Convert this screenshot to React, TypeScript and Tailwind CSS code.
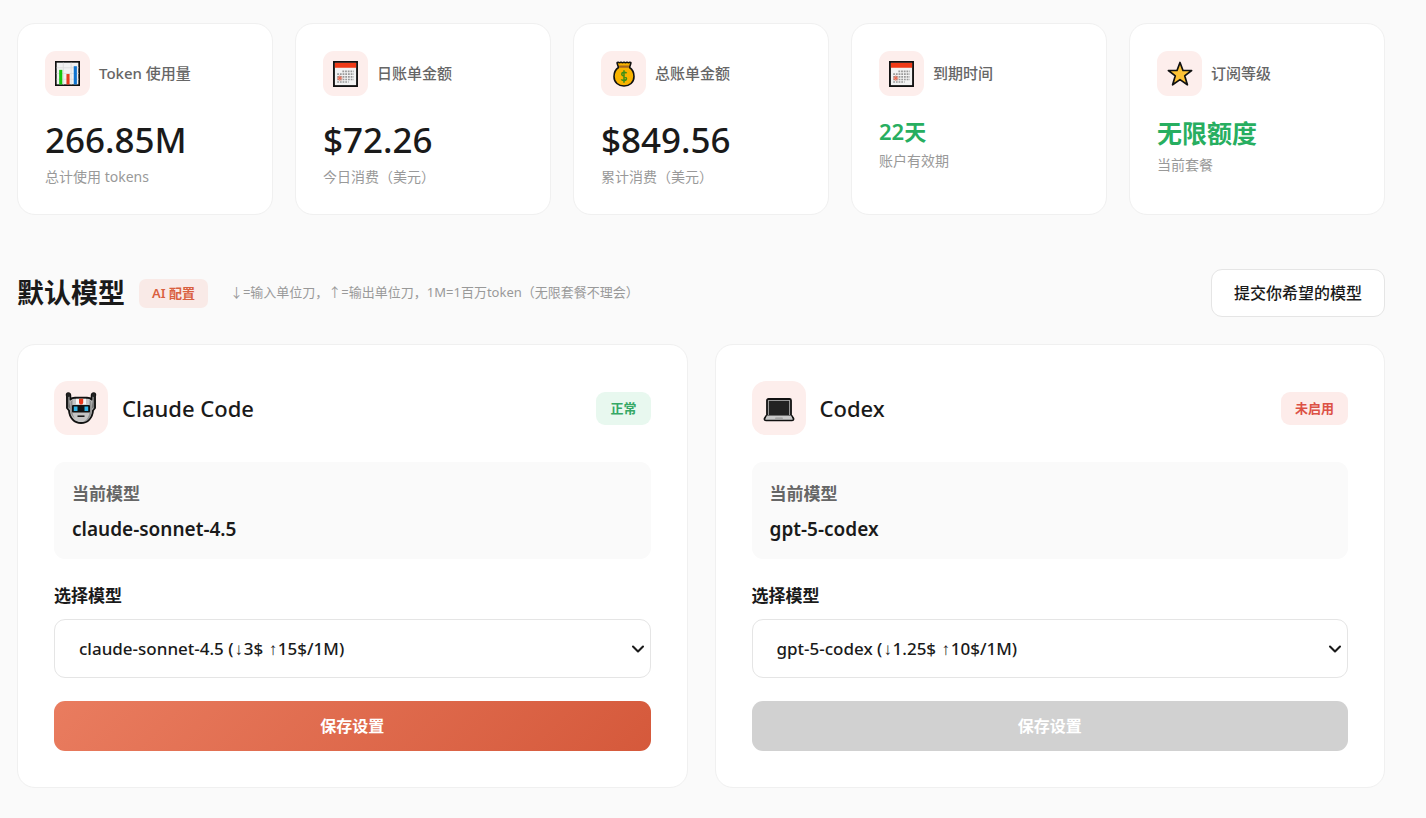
import React, { useState } from 'react';
import { ChevronDown } from 'lucide-react';

interface Stat {
  icon: React.ReactNode;
  label: string;
  value: string;
  caption: string;
  valueClass: string;
}

interface ModelCardProps {
  id: string;
  icon: React.ReactNode;
  name: string;
  model: string;
  option: string;
  enabled: boolean;
}

const ChartIcon = () => (
  <svg width="25" height="25" viewBox="0 0 24 24" aria-hidden="true">
    <rect x="0.8" y="0.8" width="22.4" height="22.4" fill="#f2f2f2" stroke="#111" strokeWidth="1.6" />
    <path d="M1.6 6.5h21M1.6 12h21M1.6 17.5h21M8 1.6v21M15.5 1.6v21" stroke="#dcdcdc" strokeWidth="0.8" />
    <rect x="4" y="8.5" width="3" height="14" fill="#16c60c" />
    <rect x="11" y="12.5" width="3" height="10" fill="#e63c1e" />
    <rect x="18" y="5" width="3" height="17.5" fill="#0f74d0" />
  </svg>
);

const CalendarIcon = () => (
  <svg width="25" height="26" viewBox="0 0 24 25" aria-hidden="true">
    <rect x="0.9" y="0.9" width="22.2" height="23.2" fill="#f2f2f2" stroke="#111" strokeWidth="1.8" />
    <rect x="1.8" y="1.8" width="20.4" height="4.7" fill="#f03a17" />
    <path d="M9 10h11M4 12.6h16M4 15.2h16M4 17.8h16M4 20.2h11" stroke="#999" strokeWidth="1.6" strokeDasharray="1.7 0.9" />
    <path d="M6.5 14v5M4 16.5h5M4.8 14.8l3.4 3.4M8.2 14.8l-3.4 3.4" stroke="#ee6a50" strokeWidth="0.9" />
  </svg>
);

const MoneyBagIcon = () => (
  <svg width="22" height="26" viewBox="0 0 22 26" aria-hidden="true">
    <path
      d="M5 1.2q1.5 1 3 0q1.5 1 3 0q1.5 1 3 0q1.5 1 3 0q1.2 0 .8 1.2L16.5 6.5C19.5 8.5 21 12 21 15.5C21 21.5 16.5 25 11 25S1 21.5 1 15.5C1 12 2.5 8.5 5.5 6.5L4.2 2.4Q3.8 1.2 5 1.2Z"
      fill="#f9b300"
      stroke="#111"
      strokeWidth="1.6"
      strokeLinejoin="round"
    />
    <path d="M5.8 4.5h10.4l-.6 2.3H6.4z" fill="#a4661d" />
    <path
      d="M13.6 12.3C12.5 10.8 8.7 10.9 8.7 13.3C8.7 15.8 13.5 14.9 13.5 17.5C13.5 20 9.3 20 8.3 18.4M11 9.3v12.5"
      fill="none"
      stroke="#3f8f16"
      strokeWidth="1.5"
    />
  </svg>
);

const StarIcon = () => (
  <svg width="26" height="26" viewBox="0 0 26 26" aria-hidden="true">
    <path
      d="M13 1.5l3 8h8.6l-6.9 5.3 2.7 9L13 18.6l-7.4 5.2 2.7-9L1.4 9.5H10z"
      fill="#fdc236"
      stroke="#111"
      strokeWidth="1.7"
      strokeLinejoin="round"
    />
  </svg>
);

const RobotIcon = () => (
  <svg width="32" height="32" viewBox="0 0 32 32" aria-hidden="true">
    <path
      d="M2 4Q1 1.8 3.2 1.2Q5.4 1.2 5.3 3.5V7.5Q7 5.8 10 5.8H22Q25 5.800 26.7 7.5V3.5Q26.6 1.2 28.8 1.2Q31 1.8 30 4V16L28 18.500C27.500 26 22.500 31 16 31S4.500 26 4 18.500L2 16z"
      fill="#c4c4c4"
      stroke="#111"
      strokeWidth="1.9"
      strokeLinejoin="round"
    />
    <path d="M3 4.500h1.500v5L5.500 17 3 15.500zM29 4.500h-1.500v5L26.500 17l2.500-1.500z" fill="#777" />
    <path d="M5.500 9.500L7.500 8v11c0 3 1 5.500 2.500 7.500C7 24.500 5.500 21.500 5.300 18zM26.500 9.500L24.500 8v11c0 5-2 8.500-6 11C24 29 26.500 24 26.700 18z" fill="#8f8f8f" />
    <circle cx="3.500" cy="3" r="2" fill="#222" />
    <circle cx="28.500" cy="3" r="2" fill="#222" />
    <rect x="11" y="6.800" width="10" height="5.500" fill="#f7f7f7" />
    <path d="M14 6.800h4.200v4.200l-1 1.500h-2.200l-1-1.500z" fill="#e8391c" />
    <rect x="7" y="13" width="18" height="7.500" rx="1" fill="#111" />
    <rect x="8.800" y="14.500" width="3.700" height="4.500" fill="#2fb5e8" />
    <rect x="19.500" y="14.500" width="3.700" height="4.500" fill="#2fb5e8" />
    <path d="M12.500 24.200h7" stroke="#111" strokeWidth="1.5" />
  </svg>
);

const LaptopIcon = () => (
  <svg width="32" height="32" viewBox="0 0 32 32" aria-hidden="true">
    <path d="M3.5 23.5l-2 3q-.4 2 1.7 2h25.600q2.100 0 1.700-2l-2-3z" fill="#c8c8c8" stroke="#111" strokeWidth="1.7" strokeLinejoin="round" />
    <rect x="4" y="7" width="24" height="17" rx="1.5" fill="#b8b8b8" stroke="#111" strokeWidth="1.8" />
    <rect x="5.8" y="8.8" width="20.4" height="14.2" fill="#222" />
    <path d="M4 23.5h24l1 2.5H3z" fill="#c8c8c8" />
    <path d="M12.5 25.5h7l.5 1.2h-8z" fill="#999" />
  </svg>
);

const stats: Stat[] = [
  { icon: <ChartIcon />, label: 'Token 使用量', value: '266.85M', caption: '总计使用 tokens', valueClass: 'text-[35px] leading-[43px] font-medium text-[#1a1a1a]' },
  { icon: <CalendarIcon />, label: '日账单金额', value: '$72.26', caption: '今日消费（美元）', valueClass: 'text-[35px] leading-[43px] font-medium text-[#1a1a1a]' },
  { icon: <MoneyBagIcon />, label: '总账单金额', value: '$849.56', caption: '累计消费（美元）', valueClass: 'text-[35px] leading-[43px] font-medium text-[#1a1a1a]' },
  { icon: <CalendarIcon />, label: '到期时间', value: '22天', caption: '账户有效期', valueClass: 'text-[22px] leading-[27px] font-semibold text-[#27ae60]' },
  { icon: <StarIcon />, label: '订阅等级', value: '无限额度', caption: '当前套餐', valueClass: 'text-[25px] leading-[31px] font-semibold text-[#27ae60]' },
];

const StatCard: React.FC<Stat> = ({ icon, label, value, caption, valueClass }) => (
  <div className="bg-white border border-[#f0f0f0] rounded-[18px] px-[27px] pt-[27px] pb-[26px]">
    <div className="flex items-center gap-[9px] mb-[22px]">
      <div className="size-[45px] shrink-0 rounded-[11px] bg-[#fdeeec] flex items-center justify-center">
        {icon}
      </div>
      <span className="text-[15px] font-medium text-[#666]">{label}</span>
    </div>
    <div className={valueClass}>{value}</div>
    <div className="mt-[5px] text-sm leading-[22px] text-[#999]">{caption}</div>
  </div>
);

const ModelCard: React.FC<ModelCardProps> = ({ id, icon, name, model, option, enabled }) => {
  const [selected, setSelected] = useState(option);

  return (
    <div className="bg-white border border-[#f0f0f0] rounded-[18px] p-9">
      <div className="flex items-center justify-between mb-[27px]">
        <div className="flex items-center gap-[14px]">
          <div className="size-[54px] rounded-[14px] bg-[#fdeeec] flex items-center justify-center">
            {icon}
          </div>
          <h3 className="text-[22px] font-medium text-[#1a1a1a]">{name}</h3>
        </div>
        <span
          className={
            enabled
              ? 'rounded-[9px] px-[14px] py-[7px] text-[13px] leading-[19px] font-bold bg-[#e8f8ef] text-[#36a866]'
              : 'rounded-[9px] px-[14px] py-[7px] text-[13px] leading-[19px] font-bold bg-[#fdecea] text-[#dc5145]'
          }
        >
          {enabled ? '正常' : '未启用'}
        </span>
      </div>

      <div className="bg-[#fafafa] rounded-[11px] px-[18px] pt-[18px] pb-[15px] mb-[23px]">
        <div className="text-[17px] leading-[27px] font-semibold text-[#666]">当前模型</div>
        <div className="mt-[7px] text-[19px] leading-[30px] font-semibold text-[#1a1a1a]">{model}</div>
      </div>

      <label htmlFor={id} className="block mb-[9px] text-[17px] leading-[28px] font-semibold text-[#1a1a1a]">
        选择模型
      </label>
      <div className="relative">
        <select
          id={id}
          value={selected}
          onChange={(e) => setSelected(e.target.value)}
          className="block w-full h-[59px] appearance-none pl-6 pr-9 rounded-[11px] border border-[#e5e5e5] bg-white text-[17px] font-medium text-[#1a1a1a]"
        >
          <option value={option}>{option}</option>
        </select>
        <ChevronDown
          size={20}
          strokeWidth={2.5}
          className="pointer-events-none absolute right-[3px] top-5 text-[#1a1a1a]"
        />
      </div>

      <button
        type="button"
        disabled={!enabled}
        className="mt-[23px] block w-full h-[50px] rounded-[11px] text-base font-semibold text-white bg-linear-135 from-[#e97c5f] to-[#d5593b] disabled:bg-none disabled:bg-[#d1d1d1]"
      >
        保存设置
      </button>
    </div>
  );
};

const App: React.FC = () => {
  return (
    <main className="min-h-screen bg-[#fafafa] pt-[23px] pb-[30px] pl-[17px] pr-[41px] font-['Noto_Sans','Liberation_Mono','Noto_Sans_CJK_SC',sans-serif]">
      <section className="grid grid-cols-5 gap-[22px]">
        {stats.map((stat) => (
          <StatCard key={stat.label} {...stat} />
        ))}
      </section>

      <section className="mt-[54px]">
        <div className="flex items-center justify-between mb-[27px]">
          <div className="flex items-center">
            <h2 className="text-[27px] font-bold text-[#1a1a1a]">默认模型</h2>
            <span className="ml-[14px] rounded-[7px] px-[13px] py-[5px] text-[13px] leading-[19px] font-semibold bg-[#f9eae7] text-[#d9603f]">
              AI 配置
            </span>
            <span className="ml-[22px] text-[13px] text-[#999] font-['Noto_Sans','Noto_Sans_CJK_SC',sans-serif]">
              ↓=输入单位刀，↑=输出单位刀，1M=1百万token（无限套餐不理会）
            </span>
          </div>
          <button
            type="button"
            className="h-12 px-[22px] rounded-[11px] border border-[#e5e5e5] bg-white text-base font-medium text-[#1a1a1a]"
          >
            提交你希望的模型
          </button>
        </div>

        <div className="grid grid-cols-2 gap-[27px]">
          <ModelCard
            id="claude-model"
            icon={<RobotIcon />}
            name="Claude Code"
            model="claude-sonnet-4.5"
            option="claude-sonnet-4.5 (↓3$ ↑15$/1M)"
            enabled
          />
          <ModelCard
            id="codex-model"
            icon={<LaptopIcon />}
            name="Codex"
            model="gpt-5-codex"
            option="gpt-5-codex (↓1.25$ ↑10$/1M)"
            enabled={false}
          />
        </div>
      </section>
    </main>
  );
};

export default App;
